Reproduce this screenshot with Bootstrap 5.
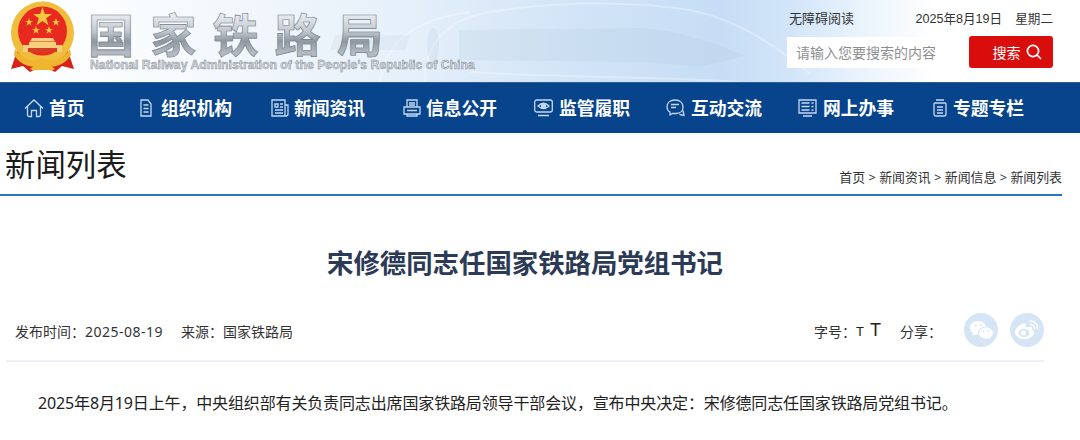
<!DOCTYPE html>
<html lang="zh-CN">
<head>
<meta charset="utf-8">
<title>宋修德同志任国家铁路局党组书记</title>
<link href="https://cdn.jsdelivr.net/npm/bootstrap@5.3.0/dist/css/bootstrap.min.css" rel="stylesheet">
<style>
html,body{height:440px;overflow:hidden;background:#fff}
body{font-family:"Noto Sans","Noto Sans CJK SC",sans-serif;color:#333;font-size:14px}
.hdr{height:82px;position:relative;overflow:hidden;background:linear-gradient(90deg,#fff 0,#f8fbfd 150px,#e6f0fa 400px,#d3e5f7 560px,#c6ddf5 720px,#d2e5f8 790px,#e9f3fc 860px,#fff 935px)}
.hdr-bg{position:absolute;left:0;top:0;pointer-events:none}
.hdr-in{position:relative;height:82px;padding-left:10px}
.emblem{width:65px;height:72px;margin-top:1px;flex:none}
.brand{margin-left:13px}
.brand-cn{font-size:46px;line-height:52px;font-weight:700;letter-spacing:16.2px;height:52px;margin-top:6px;white-space:nowrap;background:linear-gradient(180deg,#eef1f4 12%,#c3c9cf 48%,#8f98a2 68%,#b4bac1 90%);-webkit-background-clip:text;background-clip:text;color:transparent;-webkit-text-stroke:.6px #78828d;font-family:"Noto Sans CJK SC",sans-serif}
.brand-en{font-size:12.28px;line-height:14px;font-weight:700;white-space:nowrap;color:#d4d8dd;-webkit-text-stroke:.45px #7f8993;font-family:"Liberation Sans",sans-serif;margin-left:2px}
.hdr-r{width:266px;margin-right:27px;margin-left:auto}
.toplinks{height:36px;padding-top:9px;line-height:20px;font-size:13px;color:#333;padding-left:2px;font-family:"Liberation Sans","Noto Sans CJK SC",sans-serif}
.tdate{font-size:12.6px}
.wk{margin-left:13px}
.srch{height:32px;display:flex}
.srch-in{width:182px;height:31px;margin-top:1px;background:#fff;font-size:14px;padding:0 9px;line-height:31px;border:0;border-radius:0;box-shadow:none;flex:none}
.srch-in::placeholder{color:#8f8f8f;opacity:1}
.srch-btn{width:84px;height:32px;background:#da0d0d;color:#fff;border:0;border-radius:3px;font-size:14px;padding:0 0 0 12px;display:flex;align-items:center;justify-content:center;gap:5px;flex:none}
.srch-btn:hover{background:#da0d0d;color:#fff}
.mainnav{height:51px;background:#07448c;border-top:1px solid #2a5f9e;padding-left:23px;flex-wrap:nowrap}
.mainnav a{color:#fff;font-weight:700;font-size:17.8px;text-decoration:none;display:flex;align-items:center;line-height:50px;white-space:nowrap;width:132px}
.mainnav svg{flex:none;margin-left:1px;margin-right:6px}
.mainnav a:nth-child(1){width:116px}
.mainnav a:nth-child(1) svg{margin-right:5px}
.mainnav a:nth-child(2){width:131px}
.mainnav a:nth-child(2) svg{margin-right:9px}
.mainnav a:nth-child(3) svg,.mainnav a:nth-child(4) svg{margin-right:5px}
.mainnav a:nth-child(4){width:131px}
.mainnav a:nth-child(7){width:135px}
.crumbrow{height:63px;width:1062px;border-bottom:2px solid #2b73c4;padding-left:5px}
.crumbrow h1{font-size:30.4px;font-weight:400;color:#1a1a1a;margin:0;line-height:44px;padding-top:10px;height:61px}
.crumbs{font-size:12.9px;color:#333;line-height:18px;margin-bottom:8px;white-space:nowrap}
.atitle{width:1050px;font-size:26.4px;font-weight:700;color:#2b3a55;text-align:center;margin:47px 0 0;line-height:40px;height:40px}
.ameta{width:1038px;margin-left:6px;margin-top:29px;padding-left:9px;border-bottom:2px solid #eef2f8;height:50px;font-size:14px;color:#333;align-items:flex-start}
.ameta-l,.ameta-r{height:38px;display:flex;align-items:center}
.adate{letter-spacing:.5px}
.asrc{margin-left:18px}
.fs-sm,.fs-lg{color:#222;font-family:"Liberation Sans",sans-serif;line-height:1}
.fs-sm{font-size:13px}
.fs-lg{font-size:18px;margin-left:6px;margin-top:-3px}
.share{margin-left:19px;margin-right:22px}
.sico{width:34px;height:34px;border-radius:50%;background:#d5e5f6;display:flex;align-items:center;justify-content:center;flex:none;margin-top:-2px}
.sico+.sico{margin-left:12px}
.abody{margin:29px 0 0;padding-left:38px;font-size:16px;line-height:24px;color:#222;white-space:nowrap;letter-spacing:-.14px}
</style>
</head>
<body>
<header class="hdr">
<svg class="hdr-bg" width="1080" height="82" viewBox="0 0 1080 82" fill="none">
<g stroke="#fff" stroke-opacity=".3" stroke-width="2">
<path d="M425 82 C425 45 445 20 490 12 C560 0 640 2 690 10 C730 18 770 40 810 74"/>
<path d="M380 82 C385 45 410 20 470 12"/>
<path d="M470 72 C560 78 660 76 740 82"/>
</g>
<path d="M459 30 L640 28 C680 30 720 45 745 56 L702 66 L640 62 L459 60 Z" fill="#9fb4c9" fill-opacity=".12"/>
<ellipse cx="433" cy="45" rx="6" ry="17" fill="#9fb4c9" fill-opacity=".12"/>
<path d="M335 35 H410 L405 50 H330 Z" fill="#9fb4c9" fill-opacity=".1"/>
</svg>
<div class="hdr-in d-flex">
<svg class="emblem" viewBox="0 0 65 72">
<path d="M7 50 L1 68 L13 65 L20 71 L29 66 L36 66 L45 71 L52 65 L64 68 L58 50 Z" fill="#d8211b"/>
<circle cx="32.500" cy="32" r="31.500" fill="#f1bd3c"/>
<circle cx="32.500" cy="30" r="24.500" fill="#e7291f"/>
<path d="M5 48 C12 59 24 62 32.500 57 C41 62 53 59 60 48 L61 54 C53 66 41 68 32.500 63 C24 68 12 66 4 54Z" fill="#efb52f"/>
<path d="M25 60h15v9H25z" fill="#efb52f"/>
<path d="M20 68l7-6 2 2-5 6zM45 68l-7-6-2 2 5 6z" fill="#efb52f"/>
<path d="M32.500 6l2.300 7h7.300l-5.900 4.300 2.300 7-6-4.300-6 4.300 2.300-7-5.900-4.300h7.300z" fill="#f6c63c"/>
<g fill="#f6c63c"><path d="M19 17l1 3h3l-2.500 1.800 1 3L19 23l-2.500 1.800 1-3L15 20h3z"/><path d="M46 17l1 3h3l-2.500 1.800 1 3L46 23l-2.500 1.800 1-3L42 20h3z"/><path d="M26 25l1 3h3l-2.500 1.800 1 3L26 31l-2.500 1.800 1-3L22 28h3z"/><path d="M39 25l1 3h3l-2.500 1.800 1 3L39 31l-2.500 1.800 1-3L35 28h3z"/></g>
<path d="M22 37h21l2 3.500H20zM19 41h27v3H19zM13 44h39v7H13z" fill="#f3cf7e"/>
<path d="M18 47h29v4H18z" fill="#d63d25"/>
</svg>
<div class="brand">
<div class="brand-cn">国家铁路局</div>
<div class="brand-en">National Railway Administration of the People's Republic of China</div>
</div>
<div class="hdr-r">
<div class="toplinks d-flex justify-content-between"><span>无障碍阅读</span><span class="tdate">2025年8月19日<span class="wk">星期二</span></span></div>
<div class="srch">
<input class="form-control srch-in" type="text" placeholder="请输入您要搜索的内容" aria-label="搜索">
<button class="btn srch-btn" type="button">搜索
<svg width="16" height="16" viewBox="0 0 16 16" fill="none" stroke="#fff" stroke-width="1.700"><circle cx="7" cy="7" r="5.600"/><path d="M11 11l4 4"/></svg>
</button>
</div>
</div>
</div>
</header>

<nav class="mainnav d-flex">
<a href="#"><svg width="20" height="20" viewBox="0 0 20 20" fill="none" stroke="#c4d8ee" stroke-width="1.300"><path d="M1 10.500 L10 2 L19 10.500 M3.500 8.500 V17 Q3.500 18.500 5 18.500 H7.500 V12.500 H12.500 V18.500 H15 Q16.500 18.500 16.500 17 V8.500"/></svg>首页</a>
<a href="#"><svg width="12" height="18" viewBox="0 0 12 18" fill="none" stroke="#c4d8ee" stroke-width="1.300"><path d="M1 1H8L11 5V17H1ZM3.500 6H8.500M3.500 9.500H8.500M3.500 13H8.500"/></svg>组织机构</a>
<a href="#"><svg width="18" height="18" viewBox="0 0 18 18" fill="none" stroke="#c4d8ee" stroke-width="1.300"><path d="M1 1H14V17H1ZM14 6H17V15Q17 17 15 17H14M4 5H7V8H4ZM9 5H12M9 8H12M4 11H12M4 14H12"/></svg>新闻资讯</a>
<a href="#"><svg width="18" height="18" viewBox="0 0 18 18" fill="none" stroke="#c4d8ee" stroke-width="1.300"><path d="M4 8V1H14V8M1 8H17V15H1ZM6 4H12M6 6H12M4 15V17H14V15M4 11.500H14"/></svg>信息公开</a>
<a href="#"><svg width="19" height="18" viewBox="0 0 19 18" fill="none" stroke="#c4d8ee" stroke-width="1.300"><rect x=".7" y="1" width="17.600" height="12" rx="2"/><path d="M4 7Q9.500 1.500 15 7Q9.500 12 4 7ZM4 16.500H15"/><circle cx="9.500" cy="7" r="2" fill="#c4d8ee"/></svg>监管履职</a>
<a href="#"><svg width="19" height="18" viewBox="0 0 19 18" fill="none" stroke="#c4d8ee" stroke-width="1.300"><path d="M9 1C4 1 1 4 1 8C1 10 2 12 4 13V16L7 14.300C8 14.500 9 14.500 10 14.500C15 14.500 17 11 17 8C17 4 14 1 9 1ZM5 8.500H10M5 5.500H13M17 11.500L18 16.500L13.500 15.500"/></svg>互动交流</a>
<a href="#"><svg width="19" height="18" viewBox="0 0 19 18" fill="none" stroke="#c4d8ee" stroke-width="1.300"><path d="M1 1H18V14H1ZM3.500 4H11.500M3.500 7.500H11.500M3.500 11H11.500M13.500 4H15.500M13.500 7.500H15.500M13.500 11H15.500M5 17H14"/></svg>网上办事</a>
<a href="#"><svg width="14" height="18" viewBox="0 0 14 18" fill="none" stroke="#c4d8ee" stroke-width="1.300"><path d="M3 1H11M2 4H12Q13 4 13 5V15Q13 17 11 17H3Q1 17 1 15V5Q1 4 2 4ZM4 8H10M4 11H10M4 14H10"/></svg>专题专栏</a>
</nav>

<div class="crumbrow d-flex justify-content-between align-items-end">
<h1>新闻列表</h1>
<div class="crumbs">首页 &gt; 新闻资讯 &gt; 新闻信息 &gt; 新闻列表</div>
</div>

<h2 class="atitle">宋修德同志任国家铁路局党组书记</h2>

<div class="ameta d-flex justify-content-between">
<div class="ameta-l"><span>发布时间&#xFF1A;<span class="adate">2025-08-19</span></span><span class="asrc">来源&#xFF1A;国家铁路局</span></div>
<div class="ameta-r">
<span>字号&#xFF1A;</span><span class="fs-sm">T</span><span class="fs-lg">T</span>
<span class="share">分享&#xFF1A;</span>
<span class="sico"><svg width="23" height="20" viewBox="0 0 22 19" fill="#fff"><path d="M8 1C3.600 1 0 4 0 7.600C0 9.700 1.200 11.500 3 12.800L2.300 15L4.800 13.700C5.800 14 6.800 14.200 7.800 14.200C7.600 13.600 7.500 13 7.500 12.400C7.500 9 10.700 6.400 14.700 6.400H15.500C14.700 3.300 11.600 1 8 1Z"/><path d="M22 12.300C22 9.300 19 7 15.300 7C11.500 7 8.600 9.300 8.600 12.300C8.600 15.300 11.500 17.600 15.300 17.600C16.100 17.600 16.800 17.500 17.600 17.300L19.700 18.500L19.100 16.600C20.800 15.500 22 14 22 12.300Z"/><g fill="#d5e5f6"><circle cx="5.500" cy="5.200" r="1"/><circle cx="10.500" cy="5.200" r="1"/><circle cx="13" cy="10.500" r=".8"/><circle cx="17.500" cy="10.500" r=".8"/></g></svg></span>
<span class="sico"><svg width="24" height="20" viewBox="0 0 24 20" fill="#fff"><path d="M17 9.700C16.500 9.500 17 8.500 17 8C16.800 6 13.500 6.500 11.200 7.500C11.200 7.500 10.400 7.800 10.600 7C11 5.500 11 4.200 10 3.500C8.500 2.500 4.500 4.500 2 7.500C0.800 9 0 10.500 0 12.500C0 16.500 5 19 9.500 19C15 19 19 15.500 19 12.500C19 11 18 10.100 17 9.700Z"/><ellipse cx="9" cy="13" rx="5.500" ry="4" fill="#d5e5f6"/><circle cx="8.500" cy="13" r="2.500" fill="#fff"/><path d="M15 1C19 .5 23 4 22.500 9M15.500 4.500C17.500 4 20 6 19.300 8.500" fill="none" stroke="#fff" stroke-width="1.600" stroke-linecap="round"/></svg></span>
</div>
</div>

<p class="abody">2025年8月19日上午&#xFF0C;中央组织部有关负责同志出席国家铁路局领导干部会议&#xFF0C;宣布中央决定&#xFF1A;宋修德同志任国家铁路局党组书记。</p>
<script src="https://cdn.jsdelivr.net/npm/bootstrap@5.3.0/dist/js/bootstrap.bundle.min.js"></script>
</body>
</html>
